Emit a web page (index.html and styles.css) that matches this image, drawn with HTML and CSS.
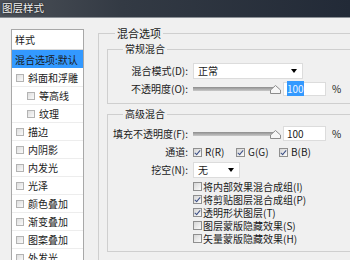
FILE: index.html
```html
<!DOCTYPE html>
<html lang="zh-CN">
<head>
    <meta charset="UTF-8">
    <meta name="viewport" content="width=device-width, initial-scale=1.0">
    <title>图层样式</title>
    <link rel="stylesheet" href="styles.css">
</head>
<body>
    <div class="titlebar">图层样式</div>

    <div class="dialog">
        <div class="side">
            <div class="side-head">样式</div>
            <div class="side-item selected">混合选项:默认</div>
            <div class="side-item"><span class="box"></span>斜面和浮雕</div>
            <div class="side-item sub"><span class="box"></span>等高线</div>
            <div class="side-item sub"><span class="box"></span>纹理</div>
            <div class="side-item"><span class="box"></span>描边</div>
            <div class="side-item"><span class="box"></span>内阴影</div>
            <div class="side-item"><span class="box"></span>内发光</div>
            <div class="side-item"><span class="box"></span>光泽</div>
            <div class="side-item"><span class="box"></span>颜色叠加</div>
            <div class="side-item"><span class="box"></span>渐变叠加</div>
            <div class="side-item"><span class="box"></span>图案叠加</div>
            <div class="side-item"><span class="box"></span>外发光</div>
        </div>

        <div class="main">
            <fieldset class="group outer">
                <legend>混合选项</legend>

                <fieldset class="group inner">
                    <legend>常规混合</legend>
                    <div class="rows normal">
                        <div class="row">
                            <label>混合模式(D):</label>
                            <div class="select mode">正常<span class="arrow"></span></div>
                        </div>
                        <div class="row tight">
                            <label>不透明度(O):</label>
                            <div class="slider">
                                <span class="track"></span>
                                <svg class="thumb" width="11" height="9" viewBox="0 0 11 9"><path d="M5.5 0.5 L10.5 5 L10.5 8.5 L0.5 8.5 L0.5 5 Z" fill="#f6f6f6" stroke="#8c8c8c"/></svg>
                            </div>
                            <div class="num"><span class="hl">100</span></div>
                            <span class="pct">%</span>
                        </div>
                    </div>
                </fieldset>

                <fieldset class="group inner">
                    <legend>高级混合</legend>
                    <div class="rows advanced">
                        <div class="row fill">
                            <label>填充不透明度(F):</label>
                            <div class="slider">
                                <span class="track"></span>
                                <svg class="thumb" width="11" height="9" viewBox="0 0 11 9"><path d="M5.5 0.5 L10.5 5 L10.5 8.5 L0.5 8.5 L0.5 5 Z" fill="#f6f6f6" stroke="#8c8c8c"/></svg>
                            </div>
                            <div class="num">100</div>
                            <span class="pct">%</span>
                        </div>
                        <div class="row channels">
                            <label>通道:</label>
                            <span class="chan"><span class="check on"></span>R(R)</span>
                            <span class="chan"><span class="check on"></span>G(G)</span>
                            <span class="chan"><span class="check on"></span>B(B)</span>
                        </div>
                        <div class="row knock">
                            <label>挖空(N):</label>
                            <div class="select small">无<span class="arrow"></span></div>
                        </div>
                        <div class="opts">
                            <div class="opt"><span class="check"></span>将内部效果混合成组(I)</div>
                            <div class="opt"><span class="check on"></span>将剪贴图层混合成组(P)</div>
                            <div class="opt"><span class="check on"></span>透明形状图层(T)</div>
                            <div class="opt"><span class="check"></span>图层蒙版隐藏效果(S)</div>
                            <div class="opt"><span class="check"></span>矢量蒙版隐藏效果(H)</div>
                        </div>
                    </div>
                </fieldset>

                <div class="row band">
                    <label>混合颜色带(E):</label>
                    <div class="select band-select">灰色<span class="arrow"></span></div>
                </div>
            </fieldset>
        </div>
    </div>
</body>
</html>
```

FILE: styles.css
```css
body {
    margin: 0;
    width: 350px;
    height: 260px;
    overflow: hidden;
    background-color: #f0f0f0;
    font-family: "Noto Sans CJK SC", "DejaVu Sans", sans-serif;
    font-size: 10px;
    color: #1a1a1a;
}
.titlebar {
    height: 17px;
    line-height: 16px;
    padding-left: 2px;
    font-size: 10.5px;
    color: #f2f2f2;
    text-shadow: 0 0 2px #000;
    background: linear-gradient(to right, #4b5057, #333a44 35%, #222a37);
    border-bottom: 1px solid #8b9096;
}
.dialog {
    display: flex;
    align-items: flex-start;
    width: 440px;
}

/* lista da esquerda */
.side {
    width: 71px;
    height: 240px;
    margin: 11px 0 0 11px;
    border: 1px solid #a8a8a8;
    background: #fff;
}
.side-head {
    height: 19px;
    line-height: 19px;
    padding-left: 3px;
    border-bottom: 1px solid #dcdcdc;
}
.side-item {
    display: flex;
    align-items: center;
    height: 17px;
    line-height: 17px;
    padding-left: 4px;
    border-bottom: 1px solid #ededed;
    white-space: nowrap;
}
.side-item.selected {
    height: 18px;
    padding-left: 3px;
    background: #3399ff;
    border-bottom-color: #fff;
}
.side-item.sub {
    padding-left: 15px;
}
.box {
    width: 8px;
    height: 8px;
    margin-right: 4px;
    box-sizing: border-box;
    border: 1px solid #b3b3b3;
    background: linear-gradient(135deg, #dedede, #fafafa);
}

/* grupos */
.main {
    margin: 8px 0 0 14px;
    width: 290px;
}
fieldset {
    margin: 0;
    min-width: 0;
    border: 1px solid #cfcfcf;
}
legend {
    padding: 0 2px;
    line-height: 14px;
}
.outer {
    padding: 2px 8px 0 8px;
}
.outer > legend {
    margin-left: 8px;
    font-size: 11px;
}
.inner {
    padding: 0;
}
.inner > legend {
    margin-left: 15px;
}
.inner + .inner {
    margin-top: 3px;
}
.rows.normal {
    padding: 7px 0 7px 0;
}
.rows.advanced {
    padding: 5px 0 6px 0;
}
.row {
    display: flex;
    align-items: center;
    line-height: 14px;
    white-space: nowrap;
}
.row label {
    width: 80px;
    margin-right: 5px;
    text-align: right;
}
.row.tight {
    margin-top: 3px;
    height: 14px;
}
.row.fill {
    height: 15px;
}
.row.channels {
    height: 14px;
    margin-top: 4px;
}
.row.knock {
    margin-top: 3px;
}

/* controles */
.select {
    display: flex;
    align-items: center;
    height: 16px;
    box-sizing: border-box;
    padding-left: 4px;
    background: #fff;
    border: 1px solid #dcdcdc;
}
.select.mode {
    width: 110px;
}
.select.small {
    width: 47px;
}
.arrow {
    margin-left: auto;
    margin-right: 5px;
    border-left: 3px solid transparent;
    border-right: 3px solid transparent;
    border-top: 4px solid #000;
}
.slider {
    position: relative;
    width: 88px;
    height: 10px;
}
.track {
    display: block;
    width: 84px;
    height: 4px;
    margin-top: 3px;
    background: linear-gradient(#8d8d8d, #c9c9c9);
}
.thumb {
    position: absolute;
    right: 0;
    top: 1px;
}
.num {
    width: 43px;
    height: 14px;
    box-sizing: border-box;
    margin-left: 2px;
    padding-left: 3px;
    line-height: 12px;
    background: #fff;
    border: 1px solid #dcdcdc;
}
.row.fill .num {
    height: 15px;
    line-height: 13px;
}
.hl {
    background: #3399ff;
    color: #eaf4ff;
}
.pct {
    margin-left: 6px;
}
.chan {
    display: flex;
    align-items: center;
    width: 43px;
}
.check {
    position: relative;
    flex: none;
    width: 9px;
    height: 9px;
    margin-right: 3px;
    box-sizing: border-box;
    border: 1px solid #8f8f8f;
    background: linear-gradient(135deg, #d6d6d6, #fbfbfb);
}
.check.on::after {
    content: "";
    position: absolute;
    left: 2px;
    top: 0;
    width: 2px;
    height: 5px;
    border-right: 1.5px solid #3b4f86;
    border-bottom: 1.5px solid #3b4f86;
    transform: rotate(40deg);
}
.opts {
    margin-top: 2px;
    padding-left: 85px;
}
.opt {
    display: flex;
    align-items: center;
    height: 13px;
    line-height: 13px;
    white-space: nowrap;
}
.opt .check {
    margin-right: 1px;
}
.row.band {
    margin-top: 8px;
}
.row.band label {
    width: 91px;
}
.select.band-select {
    width: 57px;
}
```
